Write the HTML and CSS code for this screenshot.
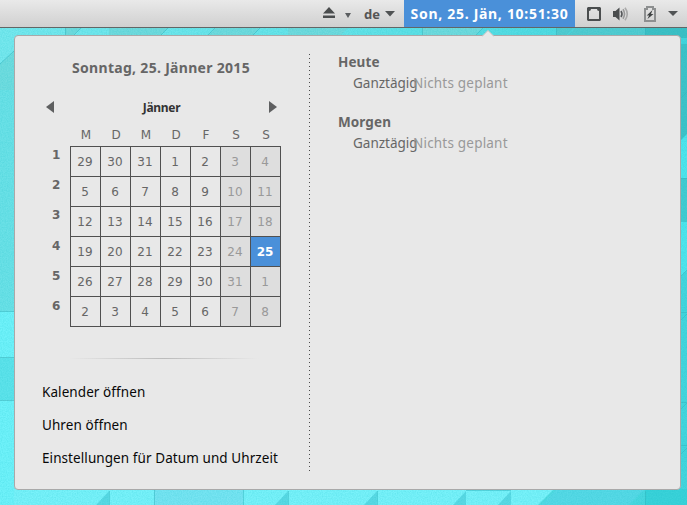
FILE: index.html
```html
<!DOCTYPE html>
<html lang="de">
<head>
<meta charset="utf-8">
<title>Kalender</title>
<link rel="stylesheet" href="styles.css">
</head>
<body>
<svg class="wallpaper" viewBox="0 0 687 505" aria-hidden="true">
  <defs>
    <linearGradient id="sea" x1="0" x2="1"><stop offset="0" stop-color="#77e8ee"/><stop offset=".5" stop-color="#66e3e8"/><stop offset="1" stop-color="#45d5dd"/></linearGradient>
    <filter id="grain"><feTurbulence type="fractalNoise" baseFrequency=".8" numOctaves="2" seed="4"/><feColorMatrix values="0 0 0 0 0  0 0 0 0 .45  0 0 0 0 .5  .5 0 0 0 -.15"/></filter>
  </defs>
  <path fill="url(#sea)" d="M0 0h687v505H0z"/>
  <path fill="#71dadd" d="M65 28h16l-9 9h-7zM109 28h59l-9 9h-50zM215 28h45l-9 9h-45zM288 28h60l-9 9h-51zM422 28h61l-9 9h-52z"/>
  <path fill="#53cbd0" d="M556 28h18l-9 9h-9zM575 28h70v9h-79z"/>
  <path fill="#3ebfc4" d="M645 28h42v10h-42z"/>
  <path fill="#70dcdf" d="M14 51v39H0V64z"/>
  <path fill="#6be1e7" d="M0 90h14v221H0z"/>
  <path fill="#70f2fa" d="M0 312h14v45H0zM0 401h14v104H0z"/>
  <path fill="#5ee3eb" d="M0 358h14v42H0z"/>
  <path fill="#40c2c8" d="M681 44h6v134h-6z"/>
  <path fill="#50e5ed" d="M681 140l6-6v44h-6zM681 222h6v48l-6 6z"/>
  <path fill="#44cbd1" d="M681 178h6v44h-6z"/>
  <path fill="#79f2fa" d="M14 489h540l-16 16H14z"/>
  <path fill="#77e4f2" d="M154 489h89v16h-89z"/>
  <path fill="#5bd9e4" d="M109 491v14H96zM288 491v14h-13zM377 491v14h-13zM466 491v14h-13zM511 491v14h-13z"/>
  <path fill="#57d9e6" d="M557 489h88l-16 16h-88z"/>
  <path fill="#3ad2d9" d="M645 489h42v16h-42z"/>
  <path fill="none" stroke="#35b3bd" stroke-opacity=".5" d="M65.500 28v8M422.500 28v8M556.500 28v8M645.500 28v8M81 28l-9 9M168 28l-9 9M215 28l-9 9M260 28l-9 9M483 28l-9 9M0 64l14-13M0 311.500h14M0 357.500h14M0 400.500h14M109.500 491v14M154.500 490v15M243.500 490v15M288.500 491v14M377.500 491v14M466 490.500h45M645.500 491v14M681 312.500h6M681 402.500h6M681 445.500h6M681 178.500h6M681 98l6-6M681 276l6-6M681 320l6-6M681 409l6-6M681 454l6-6"/>
  <path filter="url(#grain)" d="M0 28h687v477H0z" opacity=".6"/>
</svg>

<header class="topbar">
  <svg class="icon eject" viewBox="0 0 14 13"><path fill="#4a4d4e" d="M7 0l6 6.500H1zM1 8.500h12V11H1z"/></svg>
  <svg class="icon mini" viewBox="0 0 6 5"><path fill="#5b5e60" d="M0 0h6L3 5z"/></svg>
  <span class="lang">de</span>
  <svg class="icon caret" viewBox="0 0 10 6"><path fill="#505354" d="M0 0h10L5 5.500z"/></svg>
  <div class="clock"><span>Son, 25. Jän, 10:51:30</span></div>
  <svg class="icon screen" viewBox="0 0 14 14"><path fill="#4a4d4e" fill-rule="evenodd" d="M1 0h12l1 1v12l-1 1H1l-1-1V1zm3 2L3.500 3.500 2 4v8h10V4l-1.500-.5L10 2z"/></svg>
  <svg class="icon sound" viewBox="0 0 16 14"><path fill="#4a4d4e" d="M0 4h2.500L6.500.5v13L2.500 10H0z"/><g fill="none" stroke-width="1.600"><path stroke="#55585a" d="M8 4q2 3 0 6"/><path stroke="#999" d="M10 2.300q3 4.700 0 9.400"/><path stroke="#aaa" d="M12 .8q4.500 6.200 0 12.400"/></g></svg>
  <svg class="icon battery" viewBox="0 0 12 16"><path fill="none" stroke="#8d8f90" stroke-width="2" d="M1 3h2V1h6v2h2v12H1z"/><path fill="#3f4243" d="M8.500 4L2.700 9.500h2.400L3.500 13l6-5H7z"/></svg>
  <svg class="icon caret last" viewBox="0 0 10 6"><path fill="#505354" d="M0 0h10L5 5z"/></svg>
</header>

<main class="panel">
  <svg class="pointer" viewBox="0 0 12 7"><path fill="#e8e8e8" d="M0 7V6l6-6 6 6v1z"/><path fill="none" stroke="#a9a9a9" d="M0 6.500L6 .5l6 6" opacity=".6"/></svg>
  <section class="calendar">
    <h1>Sonntag, 25. Jänner 2015</h1>
    <div class="month">
      <svg class="arrow" viewBox="0 0 8 12"><path fill="#5e5f60" d="M8 0v12L0 6z"/></svg>
      <b>Jänner</b>
      <svg class="arrow" viewBox="0 0 8 12"><path fill="#5e5f60" d="M0 0l8 6-8 6z"/></svg>
    </div>
    <div class="days">
      <div class="weeks"><span>1</span><span>2</span><span>3</span><span>4</span><span>5</span><span>6</span></div>
      <table>
        <thead><tr><th>M</th><th>D</th><th>M</th><th>D</th><th>F</th><th>S</th><th>S</th></tr></thead>
        <tbody>
          <tr><td>29</td><td>30</td><td>31</td><td>1</td><td>2</td><td>3</td><td>4</td></tr>
          <tr><td>5</td><td>6</td><td>7</td><td>8</td><td>9</td><td>10</td><td>11</td></tr>
          <tr><td>12</td><td>13</td><td>14</td><td>15</td><td>16</td><td>17</td><td>18</td></tr>
          <tr><td>19</td><td>20</td><td>21</td><td>22</td><td>23</td><td>24</td><td class="today">25</td></tr>
          <tr><td>26</td><td>27</td><td>28</td><td>29</td><td>30</td><td>31</td><td>1</td></tr>
          <tr><td>2</td><td>3</td><td>4</td><td>5</td><td>6</td><td>7</td><td>8</td></tr>
        </tbody>
      </table>
    </div>
    <div class="rule"></div>
    <nav><a>Kalender öffnen</a><a>Uhren öffnen</a><a>Einstellungen für Datum und Uhrzeit</a></nav>
  </section>
  <div class="divider"></div>
  <section class="events">
    <h2>Heute</h2>
    <p><span class="when">Ganztägig</span><span class="what">Nichts geplant</span></p>
    <h2>Morgen</h2>
    <p><span class="when">Ganztägig</span><span class="what">Nichts geplant</span></p>
  </section>
</main>
</body>
</html>
```
FILE: styles.css
```css
* { box-sizing: border-box; }
body { margin: 0; width: 687px; height: 505px; overflow: hidden; font: 13.500px/20px "Noto Sans", sans-serif; color: #666; }
svg { display: block; flex: none; }
.wallpaper { position: absolute; left: 0; top: 0; width: 687px; height: 505px; z-index: -1; }
.topbar { height: 28px; display: flex; align-items: center; padding-left: 322px; background: linear-gradient(#e9e9e9, #d0d0d0); border-bottom: 1px solid #626666; }
.eject { width: 14px; height: 13px; }
.mini { width: 6px; height: 5px; margin: 4px 0 0 9px; }
.lang { width: 18px; margin-left: 13px; font-weight: 700; font-size: 13px; color: #555; white-space: nowrap; }
.caret { width: 10px; height: 6px; margin-left: 3px; }
.clock { width: 171px; height: 27px; margin-left: 9px; padding-top: 1px; display: flex; align-items: center; justify-content: center; background: #4a90d9; color: #fff; font-weight: 700; font-size: 14px; white-space: nowrap; letter-spacing: .7px; }
.screen { width: 14px; height: 14px; margin: 0 0 0 12px; }
.sound { width: 16px; height: 14px; margin-left: 12px; }
.battery { width: 12px; height: 16px; margin-left: 15px; }
.caret.last { margin-left: 12px; }
.panel { position: relative; width: 667px; height: 455px; margin: 7px 0 0 14px; border: 1px solid #a9a9a9; border-radius: 4px; background: #e8e8e8; display: flex; }
.pointer { position: absolute; left: 467px; top: -6px; width: 12px; height: 7px; }
.calendar { width: 294px; padding: 22px 0 0 27px; }
h1 { margin: 0; width: 238px; height: 20px; text-align: center; font-size: 14px; line-height: 20px; letter-spacing: .3px; white-space: nowrap; }
.month { width: 231px; margin: 20px 0 0 4px; height: 18px; display: flex; align-items: center; justify-content: space-between; color: #333; font-size: 12px; letter-spacing: -.3px; }
.month b { padding-top: 1px; }
.arrow { width: 8px; height: 12px; }
.days { display: flex; margin-top: 7px; font: 12px/14px "DejaVu Sans", sans-serif; }
.weeks { width: 28px; padding: 22px 0 0 10px; font-weight: 700; font-size: 12px; }
.weeks span { display: block; height: 30.200px; line-height: 20px; }
table { border-collapse: collapse; table-layout: fixed; width: 211px; }
th { width: 30px; height: 23px; padding: 1px 0 0 1px; font-weight: 400; vertical-align: middle; }
td { width: 30px; height: 30px; padding: 1px 1px 0 0; text-align: center; border: 1px solid #505050; }
td:nth-child(n+6) { background: #dedede; color: #999; }
td.today:last-child { background: #4a90d9; color: #fff; font-weight: 700; }
.rule { width: 190px; height: 1px; margin: 31px 0 0 27px; background: linear-gradient(90deg, #e8e8e8, #bbb, #e8e8e8); }
nav { margin-top: 17px; color: #080808; display: flex; flex-direction: column; letter-spacing: .08px; }
nav a { height: 33px; line-height: 33px; white-space: nowrap; }
.divider { width: 1px; height: 419px; margin-top: 18px; background: repeating-linear-gradient(#4c4c4c 0 1px, transparent 1px 4px); }
.events { padding: 16px 0 0 28px; }
h2 { margin: 0; height: 20px; font-size: 13.500px; line-height: 21px; letter-spacing: .1px; }
.events p { display: flex; height: 20px; margin: 1px 0 19px 15px; white-space: nowrap; }
.when { width: 60px; }
.what { color: #999; letter-spacing: .2px; }
```
